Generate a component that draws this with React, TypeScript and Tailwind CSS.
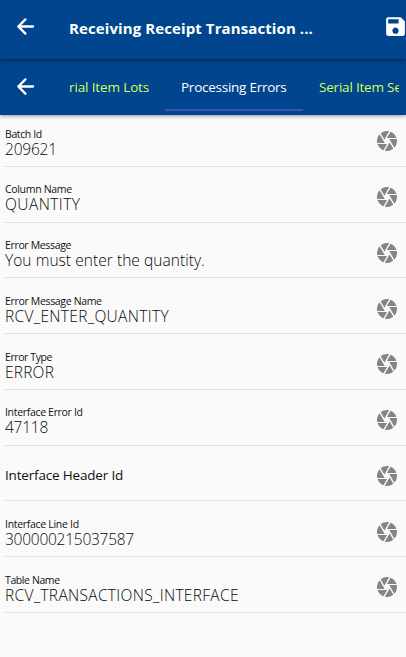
import { MdCamera, MdSave } from "react-icons/md";

type Field = { label: string; value?: string; labelClass: string; valueClass?: string };

const fields: Field[] = [
  { label: "Batch Id", value: "209621", labelClass: "tracking-[-0.4px]", valueClass: "tracking-[-0.2px]" },
  { label: "Column Name", value: "QUANTITY", labelClass: "tracking-[-0.32px]", valueClass: "tracking-[0.45px]" },
  { label: "Error Message", value: "You must enter the quantity.", labelClass: "tracking-[-0.34px]", valueClass: "tracking-[0.05px]" },
  { label: "Error Message Name", value: "RCV_ENTER_QUANTITY", labelClass: "tracking-[-0.33px]", valueClass: "tracking-[0.33px]" },
  { label: "Error Type", value: "ERROR", labelClass: "tracking-[-0.41px]", valueClass: "tracking-[0.2px]" },
  { label: "Interface Error Id", value: "47118", labelClass: "tracking-[-0.32px]", valueClass: "tracking-[-0.25px]" },
  { label: "Interface Header Id", labelClass: "tracking-[-0.18px]" },
  { label: "Interface Line Id", value: "300000215037587", labelClass: "tracking-[-0.3px]", valueClass: "tracking-[-0.25px]" },
  { label: "Table Name", value: "RCV_TRANSACTIONS_INTERFACE", labelClass: "tracking-[-0.4px]", valueClass: "tracking-[0.32px]" },
];

function BackArrow({ className }: { className: string }) {
  return (
    <svg viewBox="0 0 25 25" width="25" height="25" fill="none" stroke="currentColor" strokeWidth="2.3" strokeLinecap="round" strokeLinejoin="round" className={className}>
      <path d="M20 12.5H5.3M12.4 5.4L5.3 12.5L12.4 19.6" />
    </svg>
  );
}

function Row({ field }: { field: Field }) {
  return (
    <div className="ml-[5px] flex h-[55.75px] items-center justify-between border-b border-[#dedede] pt-[5px] pr-[6px]">
      {field.value ? (
        <div className="pt-[2.5px] whitespace-nowrap">
          <div className={`text-[10.5px] leading-[15px] text-[#111] ${field.labelClass}`}>{field.label}</div>
          <div className={`-mt-px text-[15.5px] leading-[17px] font-light text-[#080808] ${field.valueClass}`}>{field.value}</div>
        </div>
      ) : (
        <div className={`text-[13.5px] leading-[20px] whitespace-nowrap text-[#111] ${field.labelClass}`}>{field.label}</div>
      )}
      <MdCamera size={24} className="mt-px mr-[1px] shrink-0 text-[#858585]" />
    </div>
  );
}

export default function App() {
  return (
    <div className="h-[657px] w-[406px] overflow-hidden bg-[#fafafa] font-['Open_Sans','Noto_Sans',sans-serif]">
      <header className="relative z-10 flex h-[59px] items-center bg-[#00458d] pb-[6px] text-white shadow-[0_1px_4px_rgba(0,0,0,0.5)]">
        <BackArrow className="ml-[13px] shrink-0" />
        <h1 className="ml-[31px] flex-1 pt-[3px] text-[15px] leading-[22px] font-bold tracking-[0.1px] whitespace-nowrap">Receiving Receipt Transaction ...</h1>
        <MdSave size={25} className="-mr-[2px] shrink-0" />
      </header>
      <nav className="relative flex h-[56px] items-stretch bg-[#00458d] text-white shadow-[0_1px_4px_rgba(0,0,0,0.4)]">
        <BackArrow className="mt-[15px] ml-[13px] shrink-0" />
        <div className="mr-[7px] ml-[31px] flex flex-1 overflow-hidden text-[13.5px] leading-[20px] whitespace-nowrap">
          <div className="w-[96px] shrink-0 pt-[18px] tracking-[-0.13px] text-[#d4ff5c]">rial Item Lots</div>
          <div className="mb-[4px] w-[138px] shrink-0 border-b-2 border-[#3f51b5] pt-[18px] pl-[16px] tracking-[-0.25px]">Processing Errors</div>
          <div className="shrink-0 pt-[18px] pl-[16px] tracking-[-0.2px] text-[#d4ff5c]">Serial Item Se</div>
        </div>
      </nav>
      <main className="-mt-[4px]">
        {fields.map((field) => <Row key={field.label} field={field} />)}
      </main>
    </div>
  );
}
